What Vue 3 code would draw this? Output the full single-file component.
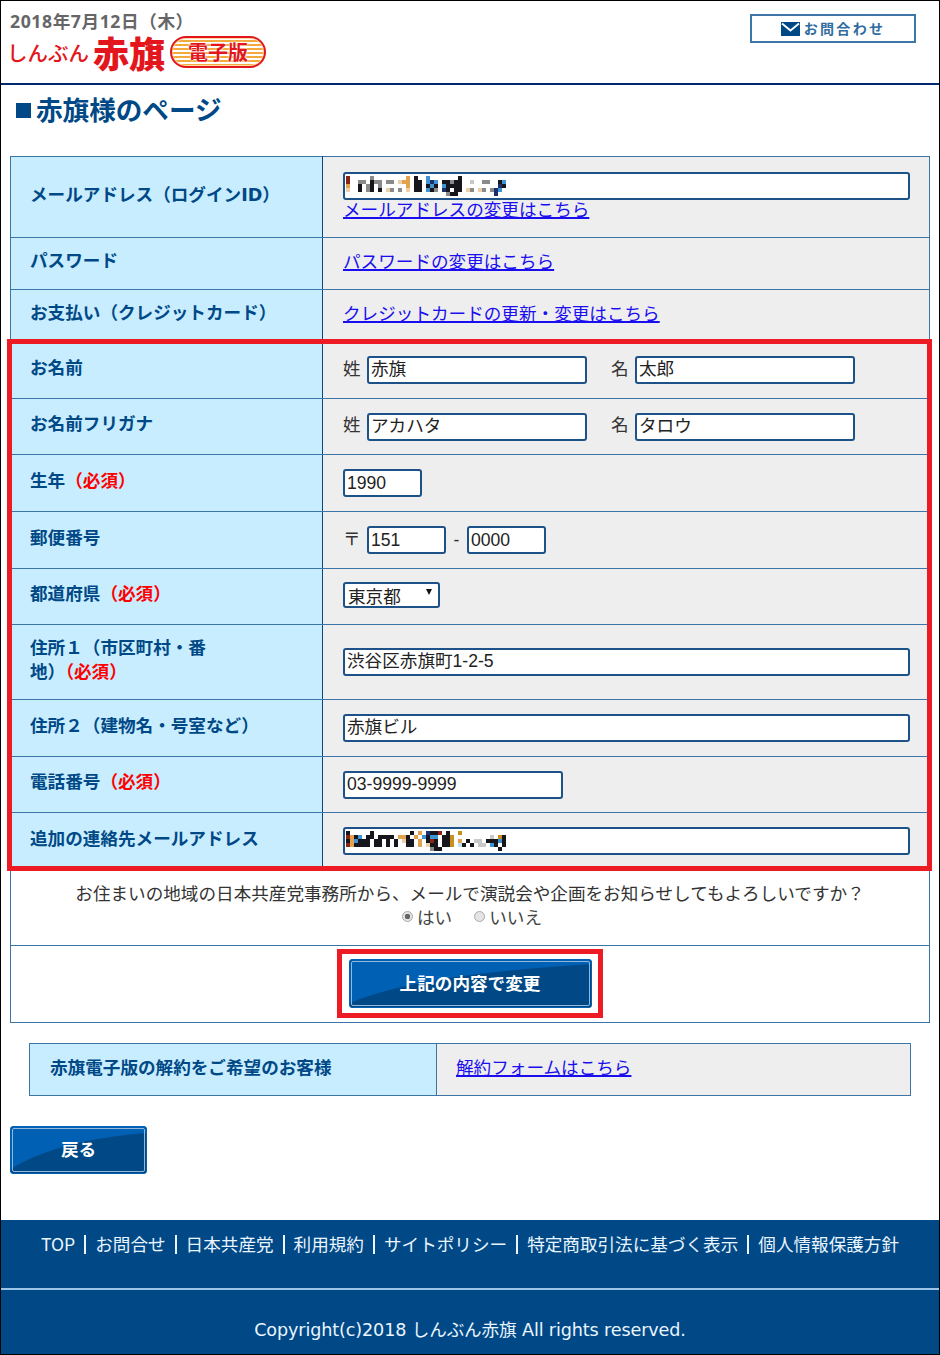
<script setup>
const palette = {
  k: '#16161c', n: '#1c2f70', r: '#8c2414', o: '#e2a24e', b: '#3f94d6',
  l: '#c2e2f6', g: '#8a8a8a', t: '#ecd0aa', s: '#c9c9c9', y: '#c8901c'
}

function toCells(rows) {
  const cells = []
  rows.forEach((row, y) => {
    ;[...row].forEach((ch, x) => {
      if (palette[ch]) cells.push({ id: `${x}-${y}`, x: x * 4, y: y * 4, fill: palette[ch] })
    })
  })
  return cells
}

const loginMosaic = toCells([
  'r.....g........o.k..b.......k...........',
  'r..gg.kgg.gg.too.kk.bnb.kkgkk..s..gg..kb',
  'o..k.gk.g......o.kk.kbk.bkkkk.........nk',
  't..k.gk.k.tg.g.t.kk.bkg.nk.kk.tg.tg.gnb',
  '.........................gkk.........n..'
])
const extraMosaic = toCells([
  'k.....k.........k.o.nkkr.k..y...........',
  'rokb.kk.kkkk.ook.o.bkbb.kky.........s.yk',
  'kobkkk.kk.k.k.tkk.o.krk.kky.o.k.ss.kkkbk',
  'rokkkk.kk.k.k..kk.o.tkk.kky.lk.k.ss.bk.k',
  '.....................gkk..............k..'
])

const rows = [
  { label: 'メールアドレス（ログインID）', kind: 'login', h: 81 },
  { label: 'パスワード', kind: 'link', link: 'パスワードの変更はこちら', h: 52 },
  { label: 'お支払い（クレジットカード）', kind: 'link', link: 'クレジットカードの更新・変更はこちら', h: 52 },
  { label: 'お名前', kind: 'name', a: '赤旗', b: '太郎', h: 57 },
  { label: 'お名前フリガナ', kind: 'name', a: 'アカハタ', b: 'タロウ', h: 56 },
  { label: '生年', req: true, kind: 'year', value: '1990', h: 57 },
  { label: '郵便番号', kind: 'zip', h: 57 },
  { label: '都道府県', req: true, kind: 'pref', h: 56 },
  { label: '住所１（市区町村・番', label2: '地）', req: true, kind: 'full', value: '渋谷区赤旗町1-2-5', h: 75 },
  { label: '住所２（建物名・号室など）', kind: 'full', value: '赤旗ビル', h: 57 },
  { label: '電話番号', req: true, kind: 'phone', value: '03-9999-9999', h: 56 },
  { label: '追加の連絡先メールアドレス', kind: 'extra', h: 57 }
]

const footerLinks = ['TOP', 'お問合せ', '日本共産党', '利用規約', 'サイトポリシー', '特定商取引法に基づく表示', '個人情報保護方針']
</script>

<template>
  <div class="page">
    <header class="head">
      <div class="brand">
        <div class="date">2018年7月12日（木）</div>
        <div class="logo">
          <span class="logo-kana">しんぶん</span>
          <span class="logo-main">赤旗</span>
          <span class="logo-pill"><span>電子版</span></span>
        </div>
      </div>
      <a class="contact">
        <svg class="mail" viewBox="0 0 19 14" width="19" height="14">
          <path d="M0 0h19v14H0z" fill="#004986" />
          <path d="M1 1.5l8.500 7 8.500-7" fill="none" stroke="#fff" stroke-width="1.800" />
        </svg>
        <span>お問合わせ</span>
      </a>
    </header>

    <h1 class="title"><span class="square"></span>赤旗様のページ</h1>

    <main class="content">
      <table class="form">
        <tbody>
          <tr v-for="row in rows" :key="row.label" :style="{ height: row.h + 'px' }">
            <th>
              {{ row.label }}<br v-if="row.label2" />{{ row.label2 }}<span v-if="row.req" class="req">（必須）</span>
            </th>
            <td>
              <template v-if="row.kind === 'login'">
                <div class="field f-full masked">
                  <svg width="170" height="20"><rect v-for="c in loginMosaic" :key="c.id" :x="c.x" :y="c.y" width="4" height="4" :fill="c.fill" /></svg>
                </div>
                <a class="link block">メールアドレスの変更はこちら</a>
              </template>
              <a v-else-if="row.kind === 'link'" class="link solo">{{ row.link }}</a>
              <div v-else-if="row.kind === 'name'" class="line">
                <span class="pre">姓</span>
                <input class="field f-name cjk" :value="row.a" readonly />
                <span class="pre second">名</span>
                <input class="field f-name cjk" :value="row.b" readonly />
              </div>
              <input v-else-if="row.kind === 'year'" class="field f-short latin" :value="row.value" readonly />
              <div v-else-if="row.kind === 'zip'" class="line">
                <span class="pre">〒</span>
                <input class="field f-short latin" value="151" readonly />
                <span class="dash">-</span>
                <input class="field f-short latin" value="0000" readonly />
              </div>
              <div v-else-if="row.kind === 'pref'" class="select">
                <span>東京都</span>
                <i class="caret"></i>
              </div>
              <input v-else-if="row.kind === 'full'" class="field f-full latin cjk" :value="row.value" readonly />
              <input v-else-if="row.kind === 'phone'" class="field f-phone latin" :value="row.value" readonly />
              <div v-else class="field f-full masked">
                <svg width="170" height="20"><rect v-for="c in extraMosaic" :key="c.id" :x="c.x" :y="c.y" width="4" height="4" :fill="c.fill" /></svg>
              </div>
            </td>
          </tr>
          <tr class="plain consent">
            <td colspan="2">
              <p>お住まいの地域の日本共産党事務所から、メールで演説会や企画をお知らせしてもよろしいですか？</p>
              <p class="radios">
                <label><i class="radio on"></i>はい</label>
                <label><i class="radio"></i>いいえ</label>
              </p>
            </td>
          </tr>
          <tr class="plain submit">
            <td colspan="2">
              <button class="btn btn-wide">
                <svg class="shine" viewBox="0 0 240 46" preserveAspectRatio="none"><path d="M0 0H240V4C150 10 60 18 0 42Z" fill="#0060b4" /></svg>
                <span>上記の内容で変更</span>
              </button>
            </td>
          </tr>
        </tbody>
      </table>

      <table class="cancel">
        <tbody>
          <tr>
            <th>赤旗電子版の解約をご希望のお客様</th>
            <td><a class="link solo low">解約フォームはこちら</a></td>
          </tr>
        </tbody>
      </table>

      <button class="btn btn-back">
        <svg class="shine" viewBox="0 0 135 46" preserveAspectRatio="none"><path d="M0 0H135V6C85 10 35 20 0 42Z" fill="#0060b4" /></svg>
        <span>戻る</span>
      </button>

      <div class="mark mark-form"></div>
      <div class="mark mark-btn"></div>
    </main>

    <footer class="foot">
      <nav class="foot-nav">
        <template v-for="(item, i) in footerLinks" :key="item">
          <span v-if="i" class="sep"></span>
          <a>{{ item }}</a>
        </template>
      </nav>
      <div class="copy">Copyright(c)2018 しんぶん赤旗 All rights reserved.</div>
    </footer>
  </div>
</template>

<style>
html, body { margin: 0; background: #fff; }
</style>

<style scoped>
* { box-sizing: border-box; }
.page {
  position: relative;
  width: 940px;
  height: 1355px;
  border: 1px solid #000;
  background: #fff;
  overflow: hidden;
  display: flex;
  flex-direction: column;
  font-family: "Noto Sans CJK JP", "Liberation Sans", sans-serif;
  font-size: 17.6px;
  color: #333;
}
.head {
  height: 84px;
  flex: none;
  border-bottom: 2px solid #00296e;
  display: flex;
  justify-content: space-between;
  align-items: flex-start;
  padding: 8px 23px 0 8px;
}
.date {
  font-family: "Open Sans", "Noto Sans CJK JP", sans-serif;
  font-weight: 700;
  color: #666;
  line-height: 24px;
  height: 24px;
  margin-left: 1px;
  letter-spacing: 0.6px;
}
.logo { display: flex; align-items: center; height: 36px; color: #e3161e; margin: 1px 0 0 -2px; }
.logo-kana { font-size: 20.500px; font-weight: 500; width: 86px; line-height: 1; }
.logo-main { font-size: 36px; font-weight: 900; line-height: 36px; width: 77px; letter-spacing: 0; }
.logo-pill {
  width: 96px;
  height: 32px;
  border: 2px solid #e3161e;
  border-radius: 16px;
  background: repeating-linear-gradient(to bottom, #fff 0, #fff 2px, #f4a93c 2px, #f4a93c 4px);
  text-align: center;
  font-size: 20px;
  font-weight: 700;
  line-height: 27px;
  box-shadow: inset 0 0 0 1px #fbd9a0;
}
.logo-pill span { text-shadow: 0 0 2px #fff, 0 0 2px #fff; }
.contact {
  margin-top: 5px;
  width: 166px;
  height: 29px;
  border: 2px solid #3f76a8;
  display: flex;
  align-items: center;
  justify-content: center;
  gap: 4px;
  color: #2f6ca0;
  font-size: 14px;
  font-weight: 700;
  line-height: 20px;
  padding-bottom: 2px;
  letter-spacing: 2.300px;
}
.mail { flex: none; margin-top: 2px; }
.title {
  margin: 0;
  height: 71px;
  flex: none;
  padding: 5px 0 0 15px;
  display: flex;
  align-items: flex-start;
  font-size: 26.600px;
  font-weight: 700;
  line-height: 38px;
  color: #004986;
}
.square { width: 15px; height: 15px; background: #004986; margin: 13px 5px 0 0; flex: none; }
.content { position: relative; flex: 1; padding: 0 9px; min-height: 0; }
table { border-collapse: collapse; }
.form { width: 920px; table-layout: fixed; }
.form th, .form td, .cancel th, .cancel td { border: 1px solid #3c76a8; }
.form th {
  width: 312px;
  background: #c8edff;
  color: #004986;
  font-family: "DejaVu Sans", "Noto Sans CJK JP", sans-serif;
  font-weight: 700;
  text-align: left;
  padding: 0 0 5px 19px;
  line-height: 24px;
  font-size: 17.600px;
  border-right-color: #004986;
}
.form td { background: #eee; padding: 0 20px; line-height: 24px; }
.req { color: #f00; }
.link { color: #1a0dee; text-decoration: underline; text-decoration-thickness: 1.500px; cursor: pointer; }
.block { display: block; line-height: 23px; margin: -3px 0 3px; }
.solo { display: block; padding-bottom: 6px; }
.solo.low { padding-bottom: 7px; }
.line { display: flex; align-items: center; }
.pre { width: 24px; flex: none; padding-bottom: 5px; }
.second { margin-left: 24px; }
.dash { width: 21px; text-align: center; font-family: "Liberation Sans", sans-serif; }
.field {
  display: block;
  height: 28px;
  border: 2px solid #1c5288;
  border-radius: 3px;
  background: #fff;
  padding: 0 2px;
  font: inherit;
  color: #222;
  outline: none;
}
.cjk { padding-bottom: 5px; }
.latin { font-family: "Liberation Sans", "Noto Sans CJK JP", sans-serif; }
.f-full { width: 567px; }
.f-name { width: 220px; }
.f-short { width: 79px; }
.f-phone { width: 220px; }
.masked { display: flex; align-items: center; padding: 0 0 0 1px; }
.masked svg { display: block; }
.select {
  position: relative;
  width: 97px;
  height: 26px;
  border: 2px solid #1c5288;
  border-radius: 3px;
  background: #fff;
  padding-left: 3px;
  line-height: 24px;
  color: #222;
  margin-bottom: 4px;
}
.caret {
  position: absolute;
  right: 6px;
  top: 5px;
  border-left: 3.500px solid transparent;
  border-right: 3.500px solid transparent;
  border-top: 6px solid #111;
}
.plain td { background: #fff; text-align: center; padding: 0; }
.consent { height: 76px; }
.consent td { padding-bottom: 6px; }
.consent p { margin: 0; line-height: 24px; }
.radios { display: flex; justify-content: center; gap: 22px; color: #444; padding-left: 4px; }
.radios label { display: flex; align-items: center; gap: 4px; }
.radio {
  width: 11px;
  height: 11px;
  border-radius: 50%;
  border: 1px solid #aaa;
  background: #e4e4e4;
}
.radio.on { background: radial-gradient(circle, #666 0 2.500px, #e4e4e4 3px); }
.submit { height: 77px; }
.btn {
  position: relative;
  display: block;
  border: 1px solid #0060b4;
  border-radius: 3px;
  background: #004986;
  color: #fff;
  font: inherit;
  font-weight: 700;
  padding: 0;
  overflow: hidden;
  box-shadow: inset 0 0 0 1px #004986;
}
.btn::after {
  content: "";
  position: absolute;
  inset: 1px;
  border: 1px solid #94b8dc;
  border-radius: 2px;
}
.btn span { position: relative; }
.shine { position: absolute; left: 0; top: 0; width: 100%; height: 100%; }
.btn-wide { width: 243px; height: 49px; margin: 0 auto; transform: translateY(-1px); }
.btn-back { width: 137px; height: 48px; margin-top: 30px; }
.btn-back span { top: -2px; }
.cancel {
  width: 882px;
  margin: 20px 0 0 19px;
  table-layout: fixed;
}
.cancel tr { height: 52px; }
.cancel th {
  width: 407px;
  background: #c8edff;
  color: #004986;
  font-weight: 700;
  text-align: left;
  padding: 0 0 6px 20px;
}
.cancel td { background: #eee; padding: 0 0 0 19px; }
.mark { position: absolute; border: 5px solid #ed1c24; pointer-events: none; }
.mark-form { left: 6px; top: 183px; width: 925px; height: 532px; }
.mark-btn { left: 336px; top: 793px; width: 266px; height: 69px; }
.foot {
  margin-top: auto;
  flex: none;
  height: 134px;
  background: #004986;
  color: #eaf5ff;
  text-align: center;
  display: flex;
  flex-direction: column;
}
.foot-nav {
  height: 68px;
  display: flex;
  justify-content: center;
  align-items: flex-start;
  padding-top: 11px;
  line-height: 26px;
}
.sep {
  width: 2px;
  height: 19px;
  background: #eaf5ff;
  margin: 4px 9px 0;
}
.copy {
  flex: 1;
  border-top: 2px solid #9cc4e4;
  padding-top: 27px;
  line-height: 26px;
  letter-spacing: -0.130px;
  font-family: "DejaVu Sans", "Noto Sans CJK JP", sans-serif;
}
</style>
